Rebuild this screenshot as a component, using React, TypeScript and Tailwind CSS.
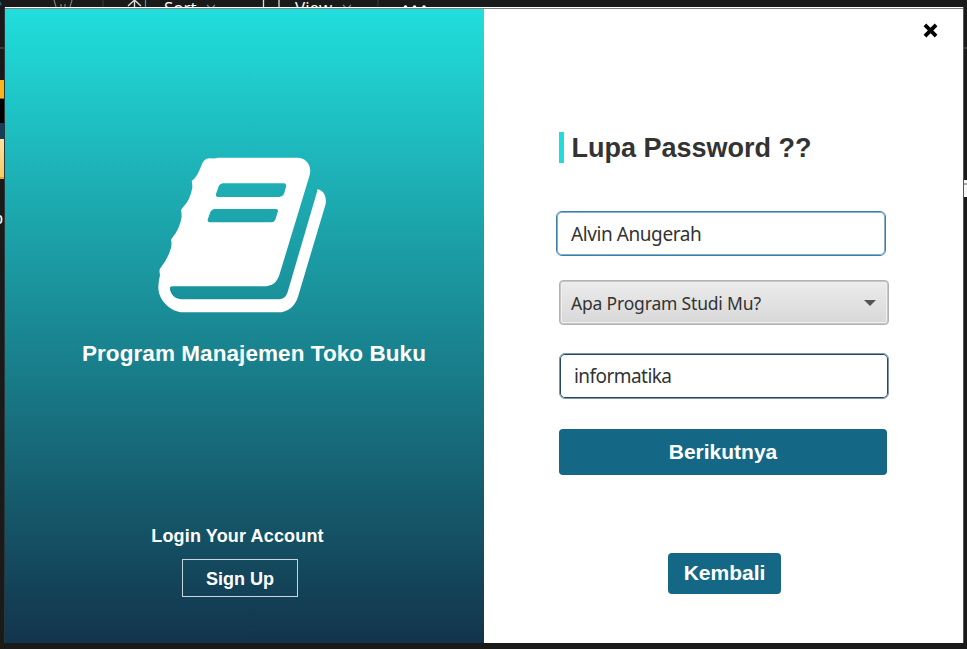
import React from 'react';

function BookIcon() {
  return (
    <svg viewBox="0 0 600 570" className="block h-[190px] w-[200px]" fill="#fff">
      <path
        fillRule="evenodd"
        d="M211 55Q225 56 235 53L472 53C499 53 518 77 508 109L418 405C411 427 397 439 370 439L97 439C90 439 88 444 91 452C96 469 110 478 130 478L412 478C428 478 438 472 443 456L532 152Q530 145 538 149C553 155 560 171 557 192L474 470C465 499 443 517 415 517L130 517C91 516 54 480 55 440Q56 422 60 405Q56 388 62 383Q84 357 93 323Q96 308 93 299L98 292Q120 264 125 230Q125 215 123 210L129 202Q151 179 157 143Q157 129 155 123L163 116Q174 103 184 77C190 62 198 53 211 55ZM248 130Q239 131 236 139L228 162Q226 170 234 171L418 171Q428 170 432 162L438 140Q440 131 433 130ZM223 207Q214 208 211 216L203 239Q202 247 209 247L392 247Q402 247 406 239L413 217Q416 208 409 207Z"
      />
    </svg>
  );
}

function DesktopTop() {
  return (
    <div className="flex h-[7px] w-full items-start overflow-hidden bg-[#1a1a1a] font-['Open_Sans',sans-serif] text-[17px] leading-[15px] text-white">
      <svg viewBox="0 0 160 7" className="h-[7px] w-[160px] shrink-0" fill="none">
        <path d="M0 1L2 4L0 6" fill="#23566f" />
        <path d="M54 0L56 7M72 0L70 7M61 4V7M65 4V7" stroke="#777" strokeWidth="1.3" />
        <path d="M103 0V7" stroke="#333" strokeWidth="1.5" />
        <path d="M128 6L134.500 0L141 6M134.500 0V7" stroke="#ddd" strokeWidth="1.4" />
        <path d="M145.500 0V7" stroke="#3994c9" strokeWidth="1.2" />
      </svg>
      <span className="ml-[4px] w-[34px]">Sort</span>
      <svg viewBox="0 0 90 7" className="h-[7px] w-[90px] shrink-0" fill="none">
        <path d="M9 5L13 9L17 5" stroke="#888" strokeWidth="1.2" />
        <path d="M65.500 0V7M81 0V7" stroke="#ddd" strokeWidth="1.3" />
      </svg>
      <span className="ml-[7px] w-[40px]">View</span>
      <svg viewBox="0 0 100 7" className="h-[7px] w-[100px] shrink-0" fill="none">
        <path d="M8 5L12 9L16 5" stroke="#888" strokeWidth="1.2" />
        <path d="M43 0V7" stroke="#333" strokeWidth="1.5" />
        <g fill="#fff">
          <circle cx="70.500" cy="7" r="1.800" />
          <circle cx="79.500" cy="7" r="1.800" />
          <circle cx="89" cy="7" r="1.800" />
        </g>
      </svg>
    </div>
  );
}

function LeftEdge() {
  return (
    <div className="flex w-[5px] shrink-0 flex-col overflow-hidden border-r border-[#263a3b] bg-[#1a1a1a]">
      <div className="h-[40px]" />
      <div className="h-[2px] bg-[#3b3b3b]" />
      <div className="h-[31px]" />
      <div className="h-[18px] bg-[#fbb51c]" />
      <div className="h-px bg-[#8a6a29]" />
      <div className="h-[24px] bg-black" />
      <div className="h-[16px] bg-[#153e5b]" />
      <div className="h-[38px] bg-linear-to-b from-[#fbe3a0] to-[#f9cb61]" />
      <div className="h-[2px] bg-[#e7a620]" />
      <div className="mt-[30px] -ml-[6px] text-[16px] leading-[20px] text-white">o</div>
    </div>
  );
}

function RightEdge() {
  return (
    <div className="flex w-[4px] shrink-0 flex-col overflow-hidden border-l border-[#555] bg-[#1a1a1a]">
      <div className="h-[40px]" />
      <div className="h-[2px] bg-[#3b3b3b]" />
      <div className="mt-[131px] h-[17px] bg-[#f6f6f6] pt-[3px]">
        <div className="h-[2px] w-full bg-[#aaa]" />
      </div>
    </div>
  );
}

export default function App() {
  return (
    <div className="flex h-[649px] w-[967px] flex-col overflow-hidden bg-[#1a1a1a] font-['Liberation_Sans',Arial,sans-serif]">
      <DesktopTop />
      <div className="flex h-[636px]">
        <LeftEdge />
        <div className="flex w-[958px] shrink-0 flex-col">
          <div className="h-px bg-white" />
          <div className="h-px bg-[#808080]" />
          <div className="flex h-[634px]">
            <section className="flex w-[479px] flex-col items-center bg-linear-to-b/srgb from-[#21dedc] to-[#12344c] font-bold text-white">
              <div className="mt-[131px] mr-[9px]">
                <BookIcon />
              </div>
              <h1 className="mt-[11px] ml-[19px] text-[22.5px] leading-[26px] tracking-[0.07px] whitespace-nowrap">Program Manajemen Toko Buku</h1>
              <p className="mt-[159px] mr-[14px] text-[18px] leading-[20px] tracking-[0.15px]">Login Your Account</p>
              <button className="mt-[13px] mr-[9px] h-[38px] w-[116px] border border-[#c8d5dc] pt-px text-[18px] leading-[20px]">Sign Up</button>
            </section>
            <section className="flex w-[479px] flex-col bg-white">
              <div className="flex h-[123px] justify-end pt-[14px] pr-[25px]">
                <svg viewBox="0 0 15 15" className="h-[15px] w-[15px]">
                  <path d="M3.300 3.300L11.700 11.700M11.700 3.300L3.300 11.700" stroke="#000" strokeWidth="3.800" strokeLinecap="square" strokeLinejoin="round" />
                </svg>
              </div>
              <h2 className="ml-[75px] h-[31px] border-l-[5px] border-[#22dcdb] pl-[7.500px] text-[27px] leading-[33px] font-bold text-[#333]">
                Lupa Password ??
              </h2>
              <div className="mt-[48px] ml-[72px] flex h-[45px] w-[330px] items-center rounded-[6px] border border-[#3c80a9] pt-px pl-[14px] font-['Noto_Sans',sans-serif] text-[19px] tracking-[-0.42px] text-[#333] shadow-[inset_0_0_0_1px_#85b0cb]">
                Alvin Anugerah
              </div>
              <div className="mt-[24px] ml-[75px] flex h-[45px] w-[330px] items-center justify-between rounded-[4px] border border-[#b3b3b3] bg-linear-to-b from-[#ececec] to-[#d8d8d8] pr-[12px] pl-[11px] font-['Noto_Sans',sans-serif] text-[17.5px] tracking-[-0.18px] text-[#333] shadow-[inset_0_0_0_1px_#c6c6c6,inset_0_0_0_2px_#f0f0f0]">
                <span className="pt-[2px]">Apa Program Studi Mu?</span>
                <svg viewBox="0 0 12 6" className="h-[6px] w-[12px]">
                  <path d="M0 0H12L6 6Z" fill="#555" />
                </svg>
              </div>
              <div className="mt-[28px] ml-[75px] flex h-[46px] w-[330px] items-center rounded-[6px] border border-[#7f95a3] pt-px pl-[14px] font-['Noto_Sans',sans-serif] text-[19px] tracking-[-0.55px] text-[#333] shadow-[inset_0_0_0_1px_#234861]">
                informatika
              </div>
              <button className="mt-[30px] ml-[75px] h-[46px] w-[328px] rounded-[4px] bg-[#146886] pb-px text-[21px] font-bold text-white">Berikutnya</button>
              <button className="mt-[78px] ml-[184px] h-[41px] w-[113px] rounded-[4px] bg-[#146886] pb-[2px] text-[21px] font-bold text-white">Kembali</button>
            </section>
          </div>
        </div>
        <RightEdge />
      </div>
    </div>
  );
}
